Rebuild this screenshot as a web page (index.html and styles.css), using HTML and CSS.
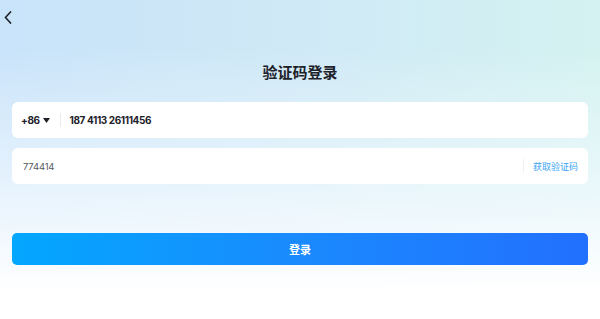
FILE: index.html
```html
<!DOCTYPE html>
<html lang="zh-CN">
<head>
<meta charset="utf-8">
<title>验证码登录</title>
<link rel="stylesheet" href="styles.css">
</head>
<body>
<div class="page">
  <div class="topbar">
    <svg class="back" width="8" height="13" viewBox="0 0 8 13"><path d="M6.5 1 L1.5 6.5 L6.5 12" fill="none" stroke="#1f2329" stroke-width="1.6" stroke-linecap="square" stroke-linejoin="miter"/></svg>
  </div>
  <h1 class="title">验证码登录</h1>
  <div class="form">
    <div class="field">
      <span class="cc">+86</span>
      <svg class="caret" width="7" height="5" viewBox="0 0 7 5"><path d="M0 0 H7 L3.5 5 Z" fill="#1f2329"/></svg>
      <span class="sep"></span>
      <span class="phone">187 4113 26111456</span>
    </div>
    <div class="field">
      <span class="code">774414</span>
      <span class="grow"></span>
      <span class="sep sep-light"></span>
      <span class="getcode">获取验证码</span>
    </div>
    <button class="login">登录</button>
  </div>
</div>
</body>
</html>
```
FILE: styles.css
```css
* { box-sizing: border-box; }
html, body { margin: 0; padding: 0; }
body {
  width: 600px;
  height: 319px;
  overflow: hidden;
  font-family: Inter, "Noto Sans CJK SC", sans-serif;
  background:
    linear-gradient(180deg, rgba(255,255,255,0) 0%, rgba(255,255,255,0) 15%, rgba(246,251,255,0.75) 65%, #ffffff 92%),
    linear-gradient(90deg, #c9e3fa 0%, #cfe9f6 50%, #d4f2f1 100%);
}
.page { height: 319px; }
.topbar { height: 24px; padding: 11px 0 0 4px; }
.back { display: block; }
.title {
  margin: 36px 0 0;
  height: 24px;
  line-height: 24px;
  text-align: center;
  font-size: 15px;
  font-weight: 700;
  color: #1d2129;
  font-family: "Noto Sans CJK SC", sans-serif;
}
.form { padding: 0 12px; margin-top: 18px; }
.field {
  height: 36px;
  background: #ffffff;
  border-radius: 6px;
  display: flex;
  align-items: center;
  padding: 0 10px 0 9px;
  margin-bottom: 10px;
}
.cc { font-size: 10px; font-weight: 700; color: #1d2129; letter-spacing: -0.4px; }
.caret { margin-left: 3px; }
.sep { width: 1px; height: 14px; background: #ebebeb; margin: 0 9px 0 10px; }
.sep-light { background: #eef0f2; margin: 0 9px 0 0; }
.phone { font-size: 10px; font-weight: 700; color: #1d2129; letter-spacing: -0.4px; }
.code { font-size: 9.5px; color: #555a60; margin-left: 2px; letter-spacing: -0.2px; }
.grow { flex: 1; }
.getcode { font-size: 9px; color: #3ba6f4; font-family: "Noto Sans CJK SC", sans-serif; }
.login {
  display: block;
  width: 100%;
  height: 32px;
  margin-top: 49px;
  border: 0;
  border-radius: 5px;
  background: linear-gradient(90deg, #03a7fe 0%, #1a8afe 50%, #2270fe 100%);
  color: #ffffff;
  font-size: 11px;
  font-weight: 700;
  font-family: "Noto Sans CJK SC", sans-serif;
  padding: 0;
}
```
